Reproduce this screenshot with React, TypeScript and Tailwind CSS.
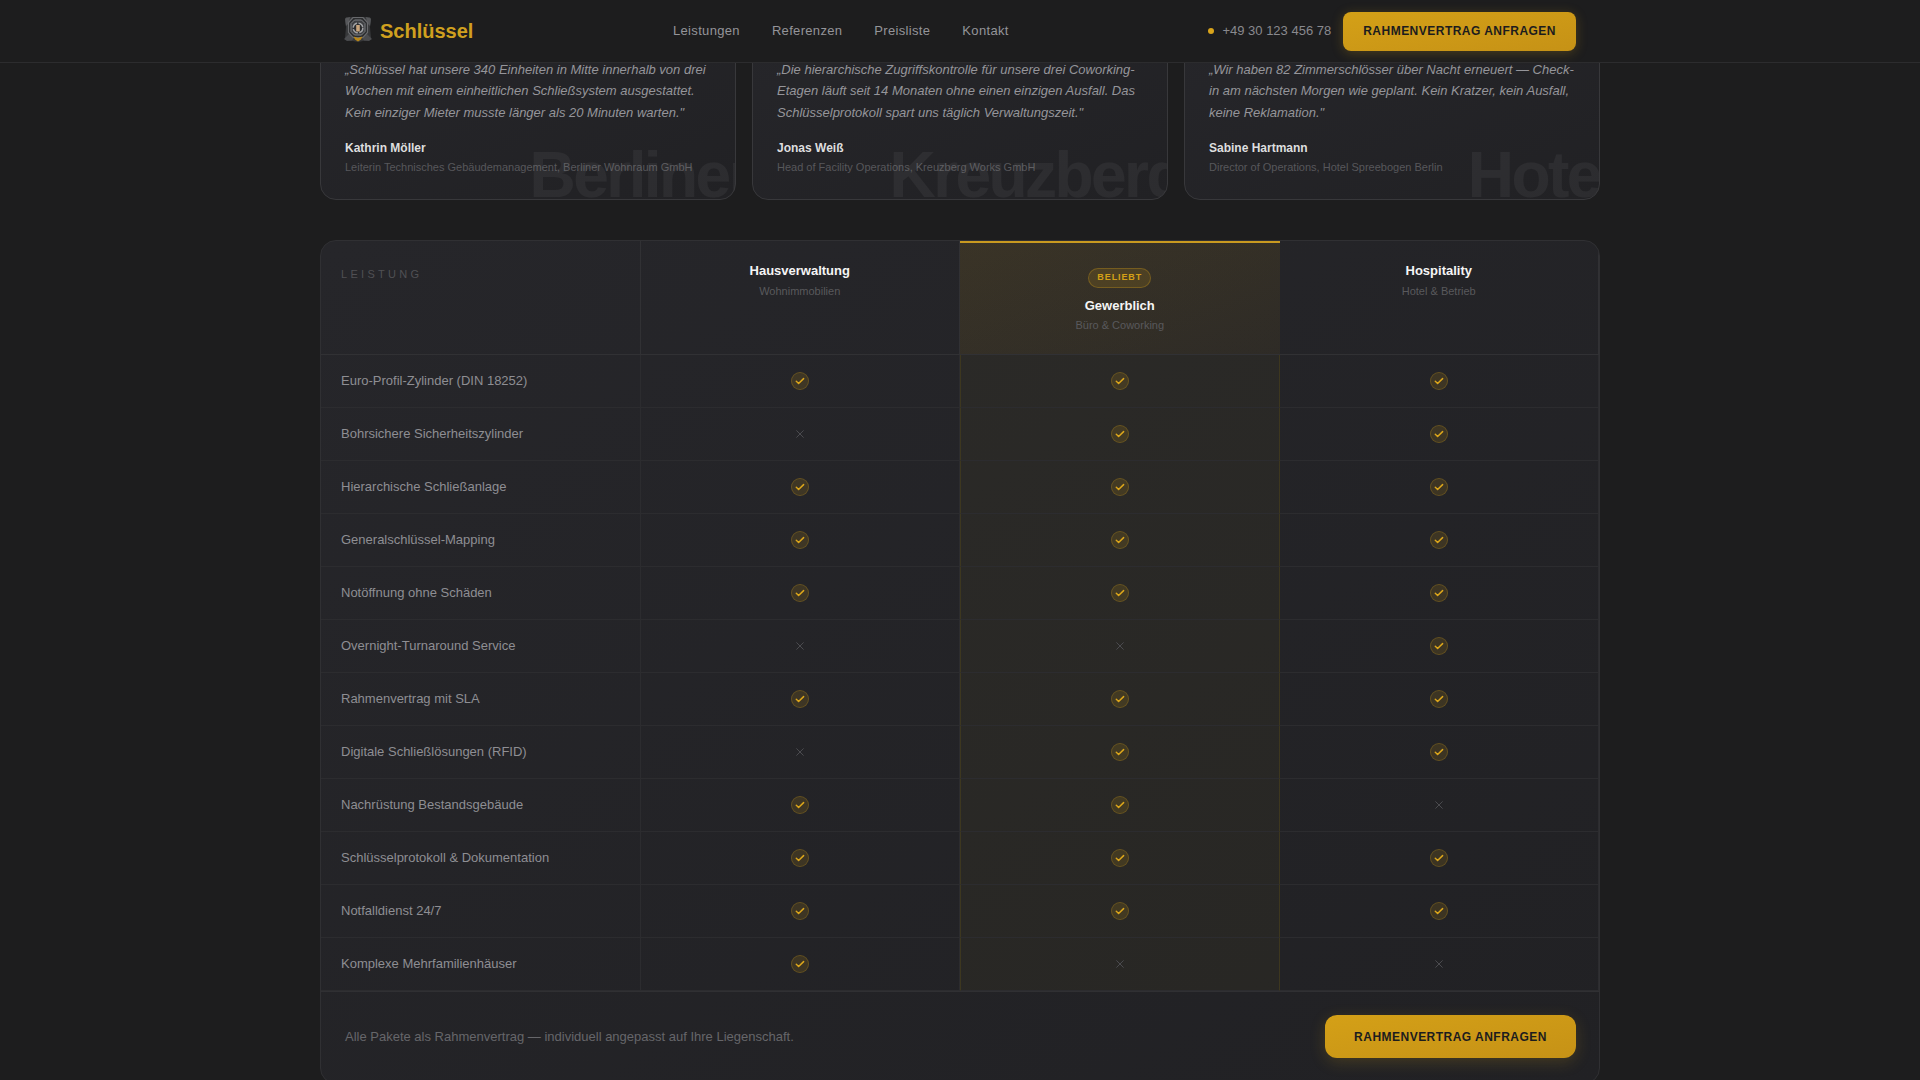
import clsx from "clsx";

const navLinks = ["Leistungen", "Referenzen", "Preisliste", "Kontakt"];

const testimonials = [
  {
    lines: [
      "„Schlüssel hat unsere 340 Einheiten in Mitte innerhalb von drei",
      "Wochen mit einem einheitlichen Schließsystem ausgestattet.",
      "Kein einziger Mieter musste länger als 20 Minuten warten.\"",
    ],
    name: "Kathrin Möller",
    role: "Leiterin Technisches Gebäudemanagement, Berliner Wohnraum GmbH",
    mark: "Berliner",
  },
  {
    lines: [
      "„Die hierarchische Zugriffskontrolle für unsere drei Coworking-",
      "Etagen läuft seit 14 Monaten ohne einen einzigen Ausfall. Das",
      "Schlüsselprotokoll spart uns täglich Verwaltungszeit.\"",
    ],
    name: "Jonas Weiß",
    role: "Head of Facility Operations, Kreuzberg Works GmbH",
    mark: "Kreuzberg",
  },
  {
    lines: [
      "„Wir haben 82 Zimmerschlösser über Nacht erneuert — Check-",
      "in am nächsten Morgen wie geplant. Kein Kratzer, kein Ausfall,",
      "keine Reklamation.\"",
    ],
    name: "Sabine Hartmann",
    role: "Director of Operations, Hotel Spreebogen Berlin",
    mark: "Hotel",
  },
];

const plans = [
  { name: "Hausverwaltung", sub: "Wohnimmobilien", popular: false },
  { name: "Gewerblich", sub: "Büro & Coworking", popular: true },
  { name: "Hospitality", sub: "Hotel & Betrieb", popular: false },
];

const features: { label: string; values: boolean[] }[] = [
  { label: "Euro-Profil-Zylinder (DIN 18252)", values: [true, true, true] },
  { label: "Bohrsichere Sicherheitszylinder", values: [false, true, true] },
  { label: "Hierarchische Schließanlage", values: [true, true, true] },
  { label: "Generalschlüssel-Mapping", values: [true, true, true] },
  { label: "Notöffnung ohne Schäden", values: [true, true, true] },
  { label: "Overnight-Turnaround Service", values: [false, false, true] },
  { label: "Rahmenvertrag mit SLA", values: [true, true, true] },
  { label: "Digitale Schließlösungen (RFID)", values: [false, true, true] },
  { label: "Nachrüstung Bestandsgebäude", values: [true, true, false] },
  { label: "Schlüsselprotokoll & Dokumentation", values: [true, true, true] },
  { label: "Notfalldienst 24/7", values: [true, true, true] },
  { label: "Komplexe Mehrfamilienhäuser", values: [true, false, false] },
];

function Crest() {
  return (
    <svg className="-mt-1" width="28" height="28" viewBox="0 0 28 28" fill="none">
      <path d="M2 2h24l1 4-1 6 1 11-4 2.500-4 .5-5 1-5-1-4-.5L1 23l1-11-1-6z" fill="#37383a" />
      <path d="M1 3.500L6 2 5 8 2 11zM27 3.500L22 2l1 6 3 3z" fill="#56575a" />
      <path d="M0 24l5-5 5 4-2 2.500-5 .5zM28 24l-5-5-5 4 2 2.500 5 .5z" fill="#4b4c4f" />
      <path d="M9 2.500h10l4.500 5v10L19 22.500H9L4.500 17.500v-10z" fill="#2b2c2e" stroke="#68696c" strokeWidth="1.2" />
      <path d="M10.500 5h7l3.500 3.500v8L17.500 20h-7L7 16.500v-8z" fill="#3e3f42" stroke="#7d7f82" strokeWidth="1" />
      <circle cx="14" cy="13" r="4.800" fill="#2b2c2e" stroke="#a0a1a4" strokeWidth="1.500" strokeDasharray="6 1.54" />
      <path d="M12.200 10h3.600v6.500h-3.600z" fill="#c9a57d" />
      <path d="M9.500 21.500L14 23l4.500-1.500-1.500 3-3 2-3-2z" fill="#b98718" />
    </svg>
  );
}

function Check() {
  return (
    <span className="flex size-[18px] items-center justify-center rounded-full border border-[#d4a017]/25 bg-[#d4a017]/15">
      <svg width="10" height="10" viewBox="0 0 10 10" fill="none">
        <path d="M1.3 5.3l2.3 2.2 5-4.9" stroke="#dca61b" strokeWidth="1.5" strokeLinecap="round" strokeLinejoin="round" />
      </svg>
    </span>
  );
}

function Cross() {
  return (
    <svg width="8" height="8" viewBox="0 0 8 8" fill="none">
      <path d="M.4.4l7.2 7.2M7.600.4L.4 7.600" stroke="#4b4b4f" strokeWidth="1" />
    </svg>
  );
}

function Header() {
  return (
    <header className="relative z-10 h-[63px] shrink-0 border-b border-[#2c2c2e] bg-[#1d1d1e]">
      <div className="mx-auto flex h-full max-w-[1280px] items-center justify-between px-6">
        <div className="flex w-[329px] items-center gap-2">
          <Crest />
          <span className="text-xl leading-7 font-bold text-[#d0a01f]">Schlüssel</span>
        </div>
        <nav className="flex flex-1 items-center gap-8">
          {navLinks.map((link) => (
            <a key={link} className="text-[13px] tracking-wide text-[#949499]">
              {link}
            </a>
          ))}
        </nav>
        <div className="flex items-center">
          <span className="mr-2 size-1.5 rounded-full bg-[#d9a41b]" />
          <span className="mr-3 text-[13px] whitespace-nowrap text-[#89898e]">+49 30 123 456 78</span>
          <button className="h-[39px] rounded-lg bg-linear-to-br from-[#d4a017] to-[#c69216] px-5 text-xs font-bold tracking-[0.04em] whitespace-nowrap text-[#1c1c1e] shadow-[0_2px_12px_rgba(212,160,23,0.25)]">
            RAHMENVERTRAG ANFRAGEN
          </button>
        </div>
      </div>
    </header>
  );
}

function Testimonial({ item }: { item: (typeof testimonials)[number] }) {
  return (
    <article className="relative overflow-hidden rounded-2xl border border-[#38383b] bg-linear-to-br from-[#26262a] to-[#212124] px-6 pt-6 pb-[23px]">
      <span className="pointer-events-none absolute -right-4 -bottom-2 text-[64px] leading-none font-bold tracking-[-0.04em] whitespace-nowrap text-white/[0.05]">
        {item.mark}
      </span>
      <p className="mb-4 text-[13px] leading-[21.45px] whitespace-nowrap text-[#95959a] italic">
        {item.lines.map((line) => (
          <span key={line} className="block">
            {line}
          </span>
        ))}
      </p>
      <div className="text-xs leading-[18px] font-bold text-[#dededf]">{item.name}</div>
      <div className="mt-0.5 text-[11px] leading-[17px] text-[#57575b]">{item.role}</div>
    </article>
  );
}

function ComparisonTable() {
  return (
    <section className="mt-10 overflow-hidden rounded-2xl border border-[#303033] bg-linear-to-br from-[#26262a] to-[#212124]">
      <div className="grid h-[114px] grid-cols-4">
        <div className="border-r border-b border-[#313134] pt-[25px] pl-5 text-[11px] leading-4 tracking-[0.3em] text-[#505054]">
          LEISTUNG
        </div>
        {plans.map((plan) => (
          <div
            key={plan.name}
            className={clsx(
              "flex flex-col items-center border-b border-[#313134]",
              plan.popular
                ? "border-t-2 border-t-[#c99a20] bg-linear-to-br from-[#d4a017]/12 to-[#d4a017]/6 pt-[25px]"
                : "border-r pt-5",
            )}
          >
            {plan.popular && (
              <span className="mb-2 flex h-5 items-center rounded-full border border-[#d4a017]/30 bg-[#d4a017]/15 px-2 pb-0.5 text-[9px] font-bold tracking-[0.1em] text-[#d4a017]">
                BELIEBT
              </span>
            )}
            <span className="text-[13px] leading-5 font-bold text-[#f5f5f5]">{plan.name}</span>
            <span className={clsx("text-[11px] leading-[17px] text-[#59595c]", plan.popular ? "mt-px" : "mt-0.5")}>
              {plan.sub}
            </span>
          </div>
        ))}
      </div>

      {features.map((feature) => (
        <div key={feature.label} className="grid h-[53px] grid-cols-4">
          <div className="flex items-center border-r border-b border-[#2c2c2f] px-5 pb-0.5 text-[13px] text-[#8e8e93]">
            {feature.label}
          </div>
          {feature.values.map((included, i) => (
            <div
              key={i}
              className={clsx(
                "flex items-center justify-center border-b border-[#2c2c2f]",
                i === 1 ? "border-x border-x-[#3d371f] bg-[#d4b417]/4" : "border-r",
              )}
            >
              {included ? <Check /> : <Cross />}
            </div>
          ))}
        </div>
      ))}

      <div className="flex items-center justify-between border-t border-[#303033] px-6 pt-[23px] pb-[25px]">
        <p className="text-[13px] text-[#66666a]">Alle Pakete als Rahmenvertrag — individuell angepasst auf Ihre Liegenschaft.</p>
        <button className="-mr-px h-[43px] w-[251px] rounded-xl bg-linear-to-br from-[#d4a017] to-[#c69216] text-xs font-bold tracking-[0.04em] whitespace-nowrap text-[#1c1c1e] shadow-[0_4px_16px_rgba(212,160,23,0.2)]">
          RAHMENVERTRAG ANFRAGEN
        </button>
      </div>
    </section>
  );
}

export default function App() {
  return (
    <div className="flex h-screen flex-col overflow-hidden bg-[#1d1d1e] font-['Liberation_Sans',Arial,sans-serif]">
      <Header />
      <main className="mx-auto -mt-[29px] w-[1280px]">
        <div className="grid grid-cols-3 gap-4">
          {testimonials.map((item) => (
            <Testimonial key={item.name} item={item} />
          ))}
        </div>
        <ComparisonTable />
      </main>
    </div>
  );
}
